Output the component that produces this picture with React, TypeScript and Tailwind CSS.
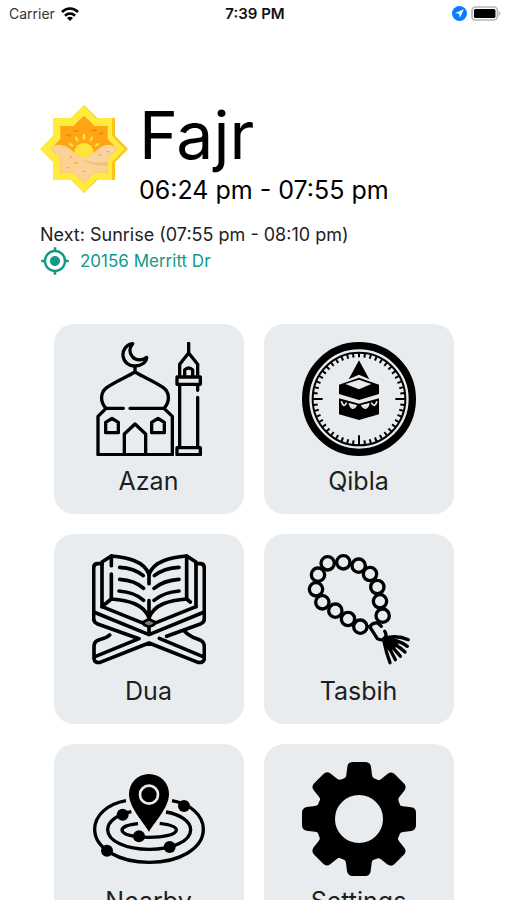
import type { ReactNode } from "react";
import { MdMyLocation } from "react-icons/md";

const TILES: { label: string; icon: ReactNode }[] = [
  { label: "Azan", icon: <MosqueIcon /> },
  { label: "Qibla", icon: <CompassIcon /> },
  { label: "Dua", icon: <BookIcon /> },
  { label: "Tasbih", icon: <BeadsIcon /> },
  { label: "Nearby", icon: <NearbyIcon /> },
  { label: "Settings", icon: <GearIcon /> },
];

export default function App() {
  return (
    <div className="flex h-screen flex-col overflow-hidden bg-white font-['Inter',sans-serif] text-black">
      <StatusBar />
      <main className="min-h-0 flex-1 overflow-y-auto [scrollbar-width:none]">
        <header className="px-10 pt-[78px]">
          <div className="flex items-start gap-[11px]">
            <StarIcon />
            <div>
              <h1 className="text-[66px] leading-[60px]">Fajr</h1>
              <p className="mt-2 text-[25px] leading-[34px]">06:24 pm - 07:55 pm</p>
            </div>
          </div>
          <p className="mt-[17px] text-[18px] leading-[22px] text-[#222]">
            Next: Sunrise (07:55 pm - 08:10 pm)
          </p>
          <button
            type="button"
            className="flex items-center gap-[10px] text-[17px] leading-[22px] text-[#12998a]"
          >
            <MdMyLocation className="size-[30px]" />
            20156 Merritt Dr
          </button>
        </header>

        <nav className="mx-auto grid max-w-[440px] grid-cols-2 gap-5 px-5 pt-12 pb-8">
          {TILES.map((t) => (
            <Tile key={t.label} label={t.label} icon={t.icon} />
          ))}
        </nav>
      </main>
    </div>
  );
}

function Tile({ label, icon }: { label: string; icon: ReactNode }) {
  return (
    <button
      type="button"
      className="flex aspect-square flex-col items-center rounded-[20px] bg-[#e8ecee] pt-[18px]"
    >
      {icon}
      <span className="mt-2 text-[25px] leading-[34px] text-[#1c1f22]">{label}</span>
    </button>
  );
}

function StatusBar() {
  return (
    <div className="grid h-[27px] shrink-0 grid-cols-3 items-center pr-1.5 pl-[9px]">
      <div className="flex items-center gap-1.5 text-[14px] text-[#333]">
        Carrier
        <svg viewBox="0 0 54 42" className="h-3.5 w-[18px]" aria-hidden="true">
          <g fill="none" stroke="#000" strokeWidth="8">
            <path d="M3 15C17 1 37 1 51 15" />
            <path d="M12 26C21 18 33 18 42 26" />
          </g>
          <path d="M27 42L18 33C23 28 31 28 36 33Z" />
        </svg>
      </div>
      <div className="text-center text-[15px] leading-5 font-semibold text-[#111]">7:39 PM</div>
      <div className="flex items-center justify-end gap-1">
        <svg viewBox="0 0 46 46" className="size-[15px]" aria-hidden="true">
          <circle cx="23" cy="23" r="23" fill="#0a7aff" />
          <path d="M36 10L9 22L22 24L24 37Z" fill="#fff" />
        </svg>
        <svg viewBox="0 0 92 46" className="h-[15px] w-[30px]" aria-hidden="true">
          <rect x="3" y="3" width="78" height="40" rx="11" fill="#fff" stroke="#b5b5b5" strokeWidth="5" />
          <rect x="9" y="9" width="66" height="28" rx="5" />
          <path d="M85 16C92 19 92 27 85 30Z" fill="#b5b5b5" />
        </svg>
      </div>
    </div>
  );
}

function StarIcon() {
  return (
    <svg viewBox="15 15 264 264" className="size-[88px] shrink-0" aria-hidden="true">
      <path
        d="M147 15L187 54H240V107L279 147L240 187V240H187L147 279L135 265V30Z"
        fill="#fbc51c"
      />
      <path
        d="M147 15L182 54H231V107L269 147L231 187V240H182L147 279L107 240H54V187L15 147L54 107V54H107Z"
        fill="#ffea3e"
      />
      <path
        d="M147 47L179 78H218V117L247 147L218 177V218H179L147 249L115 218H76V177L47 147L76 117V78H115Z"
        fill="#ffa412"
      />
      <path d="M118 158A29 29 0 1 1 176 158L147 180Z" fill="#ffe53b" />
      <g stroke="#ffe04a" strokeWidth="7" strokeLinecap="round">
        <path d="M105 132L112 137M123 113L127 121M147 105V116M171 113L167 121M189 132L182 137" />
      </g>
      <g stroke="#f28612" strokeWidth="5" strokeLinecap="round">
        <path d="M116 93H127M95 106H106M171 91H183M194 100H204" />
      </g>
      <path
        d="M55 139C74 129 94 136 110 151C126 168 142 178 170 178L218 182V218H179L147 249L115 218H76V177L47 147Z"
        fill="#fbd294"
      />
      <path
        d="M140 177C168 172 181 151 202 139C215 133 229 134 238 138L247 147L218 177V196C190 196 166 191 140 177Z"
        fill="#fad39f"
      />
      <path d="M140 177C166 188 192 190 218 185V196C189 198 162 194 140 177Z" fill="#f3c07d" />
      <g stroke="#eba75d" strokeWidth="4" strokeLinecap="round">
        <path d="M106 171H110M120 189H126M96 203H100M143 214H148M193 165H198M216 155H221" />
      </g>
    </svg>
  );
}

// All tile icons share one square canvas.
function TileSvg({ children }: { children: ReactNode }) {
  return (
    <svg viewBox="126 66 342 342" className="size-[114px] shrink-0" aria-hidden="true">
      {children}
    </svg>
  );
}

function MosqueIcon() {
  return (
    <TileSvg>
      <g fill="none" stroke="#000" strokeWidth="10" strokeLinecap="round" strokeLinejoin="round">
        <path d="M248 71C229 73 218 90 219 107C221 126 236 139 255 138C275 137 289 127 290 112C276 122 258 123 247 110C237 98 238 83 248 71Z" />
        <path d="M255 139V156M220 265H168C151 247 149 219 170 203C198 183 225 174 255 156C285 174 312 183 340 203C361 219 359 247 342 265H240" />
        <path d="M168 265L144 289V404H367V289L342 265" />
        <path d="M223 404V342L255 312L287 342V404" />
        <path d="M167 338V307L186 295L205 307V338ZM305 338V307L324 295L343 307V338Z" />
        <path d="M416 70V99M389 169V133L416 99L443 133V169M404 169V150Q416 138 428 150V169" />
        <path d="M381 171H451V193H381ZM389 195V381M443 195V211M443 232V381M381 383H451V404H381Z" />
      </g>
    </TileSvg>
  );
}

function CompassIcon() {
  const ticks = Array.from({ length: 48 }, (_, i) => i * 7.5);
  return (
    <TileSvg>
      <circle cx="297" cy="237" r="160" fill="none" stroke="#000" strokeWidth="22" />
      <circle cx="297" cy="237" r="139" fill="none" stroke="#000" strokeWidth="6" />
      {ticks.map((deg) => (
        <path
          key={deg}
          d={deg % 90 === 0 && deg !== 0 ? "M297 99V128" : "M297 99V112"}
          stroke="#000"
          strokeWidth="6"
          transform={`rotate(${deg} 297 237)`}
        />
      ))}
      <path d="M297 121L328 178L297 164L266 178Z" />
      <path d="M297 173L357 194V222L297 240L237 222V194Z" />
      <path d="M297 179L334 192L297 208L256 192Z" fill="#e8ecee" />
      <path d="M237 235L297 251L357 235V283L297 300L237 283Z" />
      <g fill="none" stroke="#e8ecee" strokeWidth="5">
        <path d="M244 244Q251 266 260 248M268 250Q278 276 289 255M305 255Q317 276 327 250M334 248Q344 266 351 244" />
      </g>
      <g fill="#e8ecee">
        <path d="M268 250Q278 270 289 255L281 253ZM327 250Q317 270 305 255L313 253Z" />
      </g>
    </TileSvg>
  );
}

function BookIcon() {
  return (
    <TileSvg>
      <g fill="none" stroke="#000" strokeWidth="11" strokeLinecap="round" strokeLinejoin="round">
        <path d="M184 107V78C228 82 282 91 297 133C312 91 366 82 410 78V207" />
        <path d="M184 132V207C235 211 282 222 297 264C312 222 359 211 410 207L421 216" />
        <path d="M297 133V161M297 212V268M184 78L156 96V230L184 207M410 78L438 96V230" />
        <path d="M156 101H143Q131 101 131 114V246L297 314L463 246V114Q463 101 451 101H438" />
        <path d="M156 230L281 280M438 230L313 280" />
        <path d="M131 246V266Q131 277 143 282L267 326L137 379M463 246V266Q463 277 451 282L350 319M297 290V312" />
        <path d="M179 315C162 333 132 322 132 350V386Q134 400 150 397L297 339L444 397Q461 400 463 386V350C463 322 432 333 405 305M328 325L457 379" />
        <path d="M209 112Q252 114 280 137M209 148Q255 151 281 175M207 183Q255 187 281 211" />
        <path d="M387 112Q342 114 313 137M387 148Q341 151 312 175M387 183Q341 187 312 211" />
      </g>
      <path
        d="M297 268L315 276L311 285L297 290L283 285L279 276Z"
        fill="#777b7d"
        stroke="#000"
        strokeWidth="8"
        strokeLinejoin="round"
      />
    </TileSvg>
  );
}

const BEADS = [
  [368, 257],
  [360, 214],
  [352, 171],
  [330, 132],
  [296, 107],
  [250, 97],
  [203, 100],
  [174, 134],
  [168, 178],
  [187, 217],
  [226, 242],
  [264, 267],
  [301, 290],
];

function BeadsIcon() {
  return (
    <TileSvg>
      <g fill="none" stroke="#000" strokeWidth="10" strokeLinecap="round" strokeLinejoin="round">
        {BEADS.map(([x, y]) => (
          <circle key={`${x}-${y}`} cx={x} cy={y} r="20" />
        ))}
        <path d="M323 290H329L352 326Q360 331 370 329M329 290Q339 277 353 279L364 289M374 304Q382 314 374 325" />
        <path d="M372 325Q411 314 445 329M372 327Q411 326 442 349M372 329Q407 340 435 366M372 331Q399 350 421 379M372 333Q393 359 406 389M372 334Q379 370 390 398" />
      </g>
      <path d="M368 323L400 321L416 342L402 358L386 362Z" />
    </TileSvg>
  );
}

function NearbyIcon() {
  return (
    <TileSvg>
      <g fill="none" stroke="#000" strokeWidth="10">
        <path d="M228 182C171 192 134 227 134 268C134 325 207 367 298 367C389 367 460 325 460 268C460 227 423 192 366 182" />
        <path d="M244 215C202 224 173 244 173 269C173 303 228 328 298 328C368 328 422 303 422 269C422 244 390 223 348 216" />
        <path d="M264 251C233 254 216 261 216 270C216 284 252 292 297 292C342 292 379 284 379 270C379 261 361 254 329 250" />
      </g>
      <path d="M297 276C285 251 237 205 237 162A60 60 0 0 1 357 162C357 205 309 251 297 276Z" />
      <circle cx="297" cy="164" r="27" fill="none" stroke="#e8ecee" strokeWidth="8" />
      <circle cx="402" cy="198" r="18" />
      <circle cx="218" cy="224" r="18" />
      <circle cx="267" cy="289" r="18" />
      <circle cx="359" cy="321" r="18" />
      <circle cx="171" cy="332" r="18" />
    </TileSvg>
  );
}

function GearIcon() {
  const teeth = [0, 45, 90, 135, 180, 225, 270, 315];
  return (
    <TileSvg>
      <circle cx="297" cy="237" r="101" fill="none" stroke="#000" strokeWidth="58" />
      {teeth.map((deg) => (
        <path
          key={deg}
          d="M252 116Q259 113 259 105L262 80Q264 66 278 66H316Q330 66 333 80L336 105Q337 113 343 116L330 142H264Z"
          transform={`rotate(${deg} 297 237)`}
        />
      ))}
    </TileSvg>
  );
}
